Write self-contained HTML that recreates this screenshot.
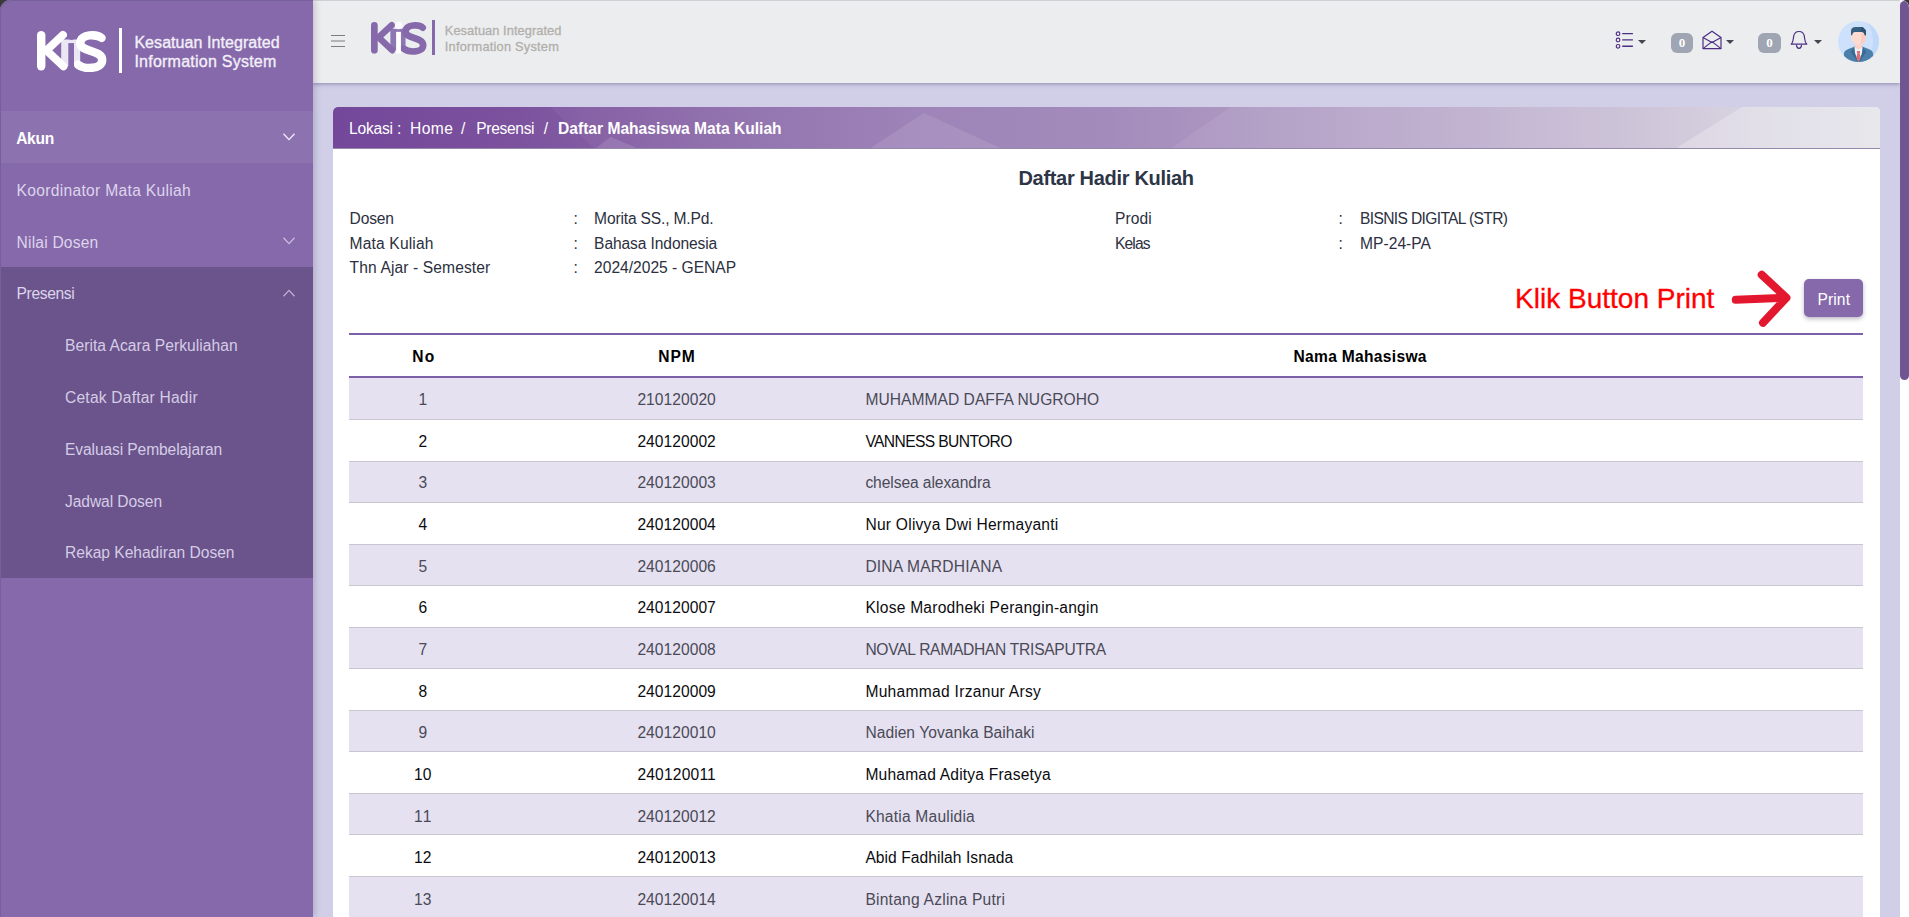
<!DOCTYPE html>
<html lang="id">
<head>
<meta charset="utf-8">
<title>KIS - Daftar Mahasiswa Mata Kuliah</title>
<style>
*{box-sizing:border-box;margin:0;padding:0}
html,body{width:1909px;height:917px;overflow:hidden;background:#3a3a3a}
body{position:relative;font-family:"Liberation Sans",sans-serif;font-size:16px;color:#2c3040}
#frame{position:absolute;left:0;top:0;width:1909px;height:917px;overflow:hidden;border-radius:11px 8px 0 0;background:#d1cfe8}
.t{position:absolute;white-space:pre;z-index:20}
svg{position:absolute;overflow:visible}
/* sidebar */
#side{position:absolute;left:0;top:0;width:313px;height:917px;background:#8569ab;box-shadow:2px 0 6px rgba(50,40,80,.22);z-index:5}
#side .akun{position:absolute;left:0;top:110.8px;width:313px;height:52px;background:#8c73b0}
#side .open{position:absolute;left:0;top:266.6px;width:313px;height:311.4px;background:#6a548b}
#edge{position:absolute;left:0;top:0;width:313px;height:917px;border-left:1px solid #75609a;border-top:1px solid #75609a;border-radius:11px 0 0 0;z-index:30;pointer-events:none}
/* topbar */
#top{position:absolute;left:313px;top:0;width:1587px;height:83px;background:#ecedef;border-top:1px solid #cfd0d3;box-shadow:0 1px 4px rgba(70,70,110,.5);z-index:4}
.badge{position:absolute;top:32px;height:20px;border-radius:6px;background:#9fa5b2;z-index:6}
.badge b{position:absolute;left:0;right:0;top:3px;text-align:center;font-family:"Liberation Serif",serif;font-size:13px;line-height:14px;color:#fff;font-weight:700}
/* card */
#card{position:absolute;left:333px;top:107px;width:1547px;height:830px;background:#fff;border-radius:5px 5px 0 0;overflow:hidden;z-index:2}
#crumb{position:absolute;left:0;top:0;width:1547px;height:42px;border-bottom:1px solid #9488ad;overflow:hidden;
 background:linear-gradient(90deg,#73479a 0%,#7c529e 12%,#8d6cab 25%,#9a7fb5 38%,#9f86b8 50%,#af9ac3 62.5%,#bdaecd 75%,#cac0d6 85%,#d4cfde 92%,#dddde3 100%)}
/* table */
.hl{position:absolute;left:349px;width:1514px;height:2px;background:#7c60a8;z-index:8}
.row{position:absolute;left:349px;width:1514px;height:41.545px;border-bottom:1px solid #c9c6d2;z-index:7}
/* button */
#btn{position:absolute;left:1804px;top:279px;width:59px;height:37.6px;border-radius:5px;background:#8569ab;box-shadow:0 2px 4px rgba(60,50,90,.35);z-index:9}
/* scrollbar */
#sb{position:absolute;left:1900px;top:0;width:9px;height:917px;background:#fff;z-index:40}
#sb i{position:absolute;left:0;top:1px;width:9.4px;height:379px;background:#6f5592;border-radius:4.7px}
</style>
</head>
<body>
<div id="frame">

<!-- SIDEBAR -->
<div id="side">
 <div class="akun"></div>
 <div class="open"></div>
 <!-- logo white -->
 <svg id="logoW" style="left:36.8px;top:31.2px" width="70" height="42" viewBox="0 0 70 42">
  <rect x="24.2" y="8.5" width="19" height="26.5" fill="#ebe6f3"/>
  <g fill="none" stroke="#fff" stroke-linecap="round" stroke-linejoin="round">
   <path d="M4.2 4.2V35.3" stroke-width="8.4"/>
   <path d="M26 3.9L9.5 19.3L26.5 35.3" stroke-width="8"/>
   <path d="M64.6 7C60.5 3.2 43.3 2.2 43.3 12C43.3 21.5 65.2 18.5 65.2 29C65.2 38.8 47 38.4 40.8 33.4" stroke-width="8.4"/>
  </g>
  <rect x="31.3" y="12.1" width="5.7" height="23" fill="#8569ab"/>
  <circle cx="34.6" cy="4.4" r="4.5" fill="#8569ab"/>
 </svg>
 <div style="position:absolute;left:119.3px;top:28.3px;width:3px;height:44.6px;background:#fff"></div>
 <!-- chevrons -->
 <svg style="left:282.6px;top:133.4px" width="12" height="8" viewBox="0 0 12 8"><path d="M.5 .8L6 6.6L11.5 .8" fill="none" stroke="#f3eff8" stroke-width="1.3"/></svg>
 <svg style="left:282.6px;top:236.6px" width="12" height="8" viewBox="0 0 12 8"><path d="M.5 .8L6 6.6L11.5 .8" fill="none" stroke="#c9bde0" stroke-width="1.3"/></svg>
 <svg style="left:282.6px;top:288.6px" width="12" height="8" viewBox="0 0 12 8"><path d="M.5 7.2L6 1.4L11.5 7.2" fill="none" stroke="#bdb0d6" stroke-width="1.3"/></svg>
</div>

<!-- TOPBAR -->
<div id="top">
 <!-- hamburger -->
 <svg style="left:18px;top:34px" width="14" height="14" viewBox="0 0 14 14"><path d="M0 .5H14M0 6H14M0 11.5H14" stroke="#7d7d7f" stroke-width="1.1" fill="none"/></svg>
 <!-- logo purple (0.8 scale) -->
 <svg id="logoP" style="left:57.9px;top:20.7px" width="56" height="33.6" viewBox="0 0 70 42">
  <rect x="24.2" y="8.5" width="19" height="26.5" fill="#8d76b4"/>
  <g fill="none" stroke="#8569ab" stroke-linecap="round" stroke-linejoin="round">
   <path d="M4.2 4.2V35.3" stroke-width="8.4"/>
   <path d="M26 3.9L9.5 19.3L26.5 35.3" stroke-width="8"/>
   <path d="M64.6 7C60.5 3.2 43.3 2.2 43.3 12C43.3 21.5 65.2 18.5 65.2 29C65.2 38.8 47 38.4 40.8 33.4" stroke-width="8.4"/>
  </g>
  <rect x="31.4" y="12.3" width="6" height="27" fill="#fff"/>
  <circle cx="34.5" cy="4.3" r="4.7" fill="#fbf9ff"/>
 </svg>
 <div style="position:absolute;left:119.2px;top:18.8px;width:2.6px;height:35.2px;background:#8569ab"></div>

 <!-- list icon -->
 <svg style="left:1302px;top:30px" width="20" height="20" viewBox="0 0 20 20" fill="none" stroke="#4b2e83" stroke-width="1.15">
  <circle cx="3.05" cy="2.7" r="1.8"/><circle cx="3.05" cy="8.95" r="1.8"/><circle cx="3.05" cy="15.25" r="1.8"/>
  <path d="M7.2 2.7H17.9M7.2 8.95H17.9M7.2 15.25H17.9" stroke-width="1.3"/>
 </svg>
 <svg style="left:1325px;top:39px" width="8" height="4" viewBox="0 0 8 4"><path d="M0 0H8L4 4Z" fill="#45454f"/></svg>
 <!-- badge 1 -->
 <div class="badge" style="left:1358px;width:22px"><b>0</b></div>
 <!-- envelope open -->
 <svg style="left:1389px;top:28.8px" width="20" height="20" viewBox="0 0 20 20" fill="none" stroke="#4b2e83" stroke-width="1.2" stroke-linejoin="round">
  <path d="M1 7.6L10 1.2L19 7.6V18.6H1Z"/>
  <path d="M1 7.6L10 12.6L19 7.6M1 18.6L10 11.6L19 18.6"/>
 </svg>
 <svg style="left:1413px;top:39px" width="8" height="4" viewBox="0 0 8 4"><path d="M0 0H8L4 4Z" fill="#45454f"/></svg>
 <!-- badge 2 -->
 <div class="badge" style="left:1445px;width:23px"><b>0</b></div>
 <!-- bell -->
 <svg style="left:1477px;top:28.6px" width="18" height="20" viewBox="0 0 18 20" fill="none" stroke="#4b2e83" stroke-width="1.2" stroke-linejoin="round" stroke-linecap="round">
  <path d="M1.2 14.2C3.4 12.2 3.2 9.4 3.6 6.6C4 3.4 6.2 1.5 9 1.5C11.8 1.5 14 3.4 14.4 6.6C14.8 9.4 14.6 12.2 16.8 14.2Z"/>
  <path d="M6.5 15.4C6.8 17.4 7.8 18.4 9 18.4C10.2 18.4 11.2 17.4 11.5 15.4"/>
 </svg>
 <svg style="left:1501px;top:39px" width="8" height="4" viewBox="0 0 8 4"><path d="M0 0H8L4 4Z" fill="#45454f"/></svg>
 <!-- avatar -->
 <svg style="left:1525px;top:20px" width="41" height="41" viewBox="-20.5 -20.5 41 41">
  <defs><clipPath id="av"><circle cx="0" cy="0" r="20.5"/></clipPath></defs>
  <circle cx="0" cy="0" r="20.5" fill="#cde1fc"/>
  <g clip-path="url(#av)">
   <path d="M7.5 -19.5C15 -13 17.5 4 9.5 20L22 20L22 -21Z" fill="#c0d8fa"/>
   <path d="M-14.6 21V12.2C-14.6 8.8 -10 7.2 -4 5.2H4C10 7.2 14.6 8.8 14.6 12.2V21Z" fill="#4a80ab"/>
   <path d="M-4.4 5.2L-7.7 10.4L-0.6 20.6H0.6L7.7 10.4L4.4 5.2Z" fill="#3a6a91"/>
   <path d="M-4.1 5.4H4.1L3.5 11.5L0 20.4L-3.5 11.5Z" fill="#e9f4fd"/>
   <path d="M-1.6 9.4H1.6V11.2L1.1 11.6L2.2 16.2L0 20.6L-2.2 16.2L-1.1 11.6L-1.6 11.2Z" fill="#de6f78"/>
   <path d="M-3.5 0H3.5V6L0 8.4L-3.5 6Z" fill="#fdd3c8"/>
   <path d="M-7.3 -7C-7.3 -9 -5 -10 0 -10C5 -10 7.3 -9 7.3 -7V-3.5C7.3 0 3.4 3.2 0 3.2C-3.4 3.2 -7.3 0 -7.3 -3.5Z" fill="#fedbd1"/>
   <path d="M2.2 -10C5.5 -9.8 7.3 -9 7.3 -7V-3.5C7.3 -.5 4.5 2.4 1.4 3.1C3.2 0 3 -5 2.2 -10Z" fill="#fdcbbf"/>
   <path d="M-7.5 -6.2V-10.5C-7.5 -13.4 -5.6 -14.5 -3 -14.5H3.6C4.6 -14.5 5 -13.7 5.4 -13C6.8 -12.4 7.5 -11 7.5 -9.4V-6.2H6.3C6 -8.2 5.2 -9.6 3.6 -9.6H-3.6C-5.2 -9.6 -6 -8.2 -6.3 -6.2Z" fill="#36607f"/>
   <path d="M2.2 -14.5H3.6C4.6 -14.5 5 -13.7 5.4 -13C6.8 -12.4 7.5 -11 7.5 -9.4V-6.2H6.3C6 -8.2 5.2 -9.6 3.6 -9.6H2.2Z" fill="#2c5472"/>
  </g>
 </svg>
</div>

<!-- CARD -->
<div id="card">
 <div id="crumb">
  <svg style="left:0;top:0" width="1547" height="42" viewBox="0 0 1547 42">
   <path d="M217 0L262 42L1547 42L1547 0Z" fill="#fff" opacity=".045"/>
   <path d="M262 42L277.6 29.7L306 42Z" fill="#fff" opacity=".12"/>
   <path d="M536 42L591 6L669.6 42Z" fill="#fff" opacity=".10"/>
   <path d="M837 42L897.5 0L1547 0L1547 42Z" fill="#fff" opacity=".07"/>
   <path d="M1341.8 42L1408.9 0L1547 0L1547 42Z" fill="#fff" opacity=".25"/>
  </svg>
 </div>
</div>

<!-- TABLE lines + rows -->
<div class="hl" style="top:333px"></div>
<div class="hl" style="top:376px"></div>
<div class="row" style="top:378.45px;background:#e5e1f0"></div>
<div class="row" style="top:420.00px;background:#ffffff"></div>
<div class="row" style="top:461.54px;background:#e5e1f0"></div>
<div class="row" style="top:503.08px;background:#ffffff"></div>
<div class="row" style="top:544.63px;background:#e5e1f0"></div>
<div class="row" style="top:586.17px;background:#ffffff"></div>
<div class="row" style="top:627.72px;background:#e5e1f0"></div>
<div class="row" style="top:669.26px;background:#ffffff"></div>
<div class="row" style="top:710.81px;background:#e5e1f0"></div>
<div class="row" style="top:752.36px;background:#ffffff"></div>
<div class="row" style="top:793.90px;background:#e5e1f0"></div>
<div class="row" style="top:835.44px;background:#ffffff"></div>
<div class="row" style="top:876.99px;background:#e5e1f0"></div>

<!-- button + arrow -->
<div id="btn"></div>
<svg style="left:1725px;top:265px;z-index:9" width="70" height="66" viewBox="1725 265 70 66">
 <path d="M1735.8 299.8L1786.2 297.8M1761.7 274.7L1786.4 297.7L1763 322.8" fill="none" stroke="#e3172d" stroke-width="8" stroke-linecap="round" stroke-linejoin="round"/>
</svg>

<span class="t" style="left:134.40px;top:32px;font-size:16px;line-height:21px;color:#f3eff8;letter-spacing:0.061px;-webkit-text-stroke:.35px #f3eff8;">Kesatuan Integrated</span>
<span class="t" style="left:134.40px;top:51px;font-size:16px;line-height:21px;color:#f3eff8;letter-spacing:0.240px;-webkit-text-stroke:.35px #f3eff8;">Information System</span>
<span class="t" style="left:16.20px;top:128px;font-size:15.6px;line-height:21px;color:#ffffff;font-weight:700;letter-spacing:-0.328px;">Akun</span>
<span class="t" style="left:16.50px;top:180px;font-size:15.6px;line-height:21px;color:#ded5ec;letter-spacing:0.313px;">Koordinator Mata Kuliah</span>
<span class="t" style="left:16.50px;top:232px;font-size:15.6px;line-height:21px;color:#ded5ec;letter-spacing:0.205px;">Nilai Dosen</span>
<span class="t" style="left:16.50px;top:283px;font-size:15.6px;line-height:21px;color:#ded5ec;letter-spacing:-0.339px;">Presensi</span>
<span class="t" style="left:65.00px;top:335px;font-size:15.6px;line-height:21px;color:#d6cce6;letter-spacing:0.042px;">Berita Acara Perkuliahan</span>
<span class="t" style="left:65.00px;top:387px;font-size:15.6px;line-height:21px;color:#d6cce6;letter-spacing:0.203px;">Cetak Daftar Hadir</span>
<span class="t" style="left:65.00px;top:439px;font-size:15.6px;line-height:21px;color:#d6cce6;letter-spacing:-0.110px;">Evaluasi Pembelajaran</span>
<span class="t" style="left:65.00px;top:491px;font-size:15.6px;line-height:21px;color:#d6cce6;letter-spacing:-0.078px;">Jadwal Dosen</span>
<span class="t" style="left:65.00px;top:542px;font-size:15.6px;line-height:21px;color:#d6cce6;letter-spacing:-0.021px;">Rekap Kehadiran Dosen</span>
<span class="t" style="left:444.80px;top:21px;font-size:12.8px;line-height:19px;color:#b1afab;letter-spacing:0.074px;-webkit-text-stroke:.3px #b1afab;">Kesatuan Integrated</span>
<span class="t" style="left:444.80px;top:37px;font-size:12.8px;line-height:19px;color:#b1afab;letter-spacing:0.221px;-webkit-text-stroke:.3px #b1afab;">Information System</span>
<span class="t" style="left:349.00px;top:118px;font-size:15.6px;line-height:21px;color:#fff;letter-spacing:-0.207px;">Lokasi :</span>
<span class="t" style="left:410.00px;top:118px;font-size:15.6px;line-height:21px;color:#fff;letter-spacing:0.464px;">Home</span>
<span class="t" style="left:461.00px;top:118px;font-size:15.6px;line-height:21px;color:#fff;">/</span>
<span class="t" style="left:476.20px;top:118px;font-size:15.6px;line-height:21px;color:#fff;letter-spacing:-0.325px;">Presensi</span>
<span class="t" style="left:543.80px;top:118px;font-size:15.6px;line-height:21px;color:#fff;">/</span>
<span class="t" style="left:558.00px;top:118px;font-size:15.6px;line-height:21px;color:#fff;font-weight:700;">Daftar Mahasiswa Mata Kuliah</span>
<span class="t" style="left:1018.45px;top:165px;font-size:20px;line-height:26px;color:#2d3546;font-weight:700;letter-spacing:-0.314px;">Daftar Hadir Kuliah</span>
<span class="t" style="left:349.60px;top:208px;font-size:15.6px;line-height:21px;color:#2c3040;letter-spacing:-0.195px;">Dosen</span>
<span class="t" style="left:349.60px;top:233px;font-size:15.6px;line-height:21px;color:#2c3040;letter-spacing:0.154px;">Mata Kuliah</span>
<span class="t" style="left:349.60px;top:257px;font-size:15.6px;line-height:21px;color:#2c3040;letter-spacing:0.113px;">Thn Ajar - Semester</span>
<span class="t" style="left:573.60px;top:208px;font-size:15.6px;line-height:21px;color:#2c3040;">:</span>
<span class="t" style="left:573.60px;top:233px;font-size:15.6px;line-height:21px;color:#2c3040;">:</span>
<span class="t" style="left:573.60px;top:257px;font-size:15.6px;line-height:21px;color:#2c3040;">:</span>
<span class="t" style="left:594.10px;top:208px;font-size:15.6px;line-height:21px;color:#2c3040;letter-spacing:-0.168px;">Morita SS., M.Pd.</span>
<span class="t" style="left:594.10px;top:233px;font-size:15.6px;line-height:21px;color:#2c3040;letter-spacing:-0.111px;">Bahasa Indonesia</span>
<span class="t" style="left:594.10px;top:257px;font-size:15.6px;line-height:21px;color:#2c3040;letter-spacing:-0.011px;">2024/2025 - GENAP</span>
<span class="t" style="left:1115.00px;top:208px;font-size:15.6px;line-height:21px;color:#2c3040;letter-spacing:0.073px;">Prodi</span>
<span class="t" style="left:1115.00px;top:233px;font-size:15.6px;line-height:21px;color:#2c3040;letter-spacing:-0.854px;">Kelas</span>
<span class="t" style="left:1338.60px;top:208px;font-size:15.6px;line-height:21px;color:#2c3040;">:</span>
<span class="t" style="left:1338.60px;top:233px;font-size:15.6px;line-height:21px;color:#2c3040;">:</span>
<span class="t" style="left:1360.00px;top:208px;font-size:15.6px;line-height:21px;color:#2c3040;letter-spacing:-0.647px;">BISNIS DIGITAL (STR)</span>
<span class="t" style="left:1360.00px;top:233px;font-size:15.6px;line-height:21px;color:#2c3040;letter-spacing:0.033px;">MP-24-PA</span>
<span class="t" style="left:1515.00px;top:281px;font-size:28px;line-height:35px;color:#ff0000;letter-spacing:0.012px;-webkit-text-stroke:.3px #ff0000;">Klik Button Print</span>
<span class="t" style="left:1817.40px;top:289px;font-size:15.6px;line-height:21px;color:#fff;letter-spacing:0.130px;">Print</span>
<span class="t" style="left:412.20px;top:346px;font-size:15.6px;line-height:21px;color:#000;font-weight:700;letter-spacing:1.203px;">No</span>
<span class="t" style="left:658.35px;top:346px;font-size:15.6px;line-height:21px;color:#000;font-weight:700;letter-spacing:0.922px;">NPM</span>
<span class="t" style="left:1293.50px;top:346px;font-size:15.6px;line-height:21px;color:#000;font-weight:700;letter-spacing:0.296px;">Nama Mahasiswa</span>
<span class="t" style="left:418.46px;top:389px;font-size:15.6px;line-height:21px;color:#4a4a57;">1</span>
<span class="t" style="left:637.40px;top:389px;font-size:15.6px;line-height:21px;color:#4a4a57;letter-spacing:0.042px;">210120020</span>
<span class="t" style="left:865.40px;top:389px;font-size:15.6px;line-height:21px;color:#4a4a57;letter-spacing:0.036px;">MUHAMMAD DAFFA NUGROHO</span>
<span class="t" style="left:418.46px;top:431px;font-size:15.6px;line-height:21px;color:#0c0c10;">2</span>
<span class="t" style="left:637.40px;top:431px;font-size:15.6px;line-height:21px;color:#0c0c10;letter-spacing:0.042px;">240120002</span>
<span class="t" style="left:865.40px;top:431px;font-size:15.6px;line-height:21px;color:#0c0c10;letter-spacing:-0.599px;">VANNESS BUNTORO</span>
<span class="t" style="left:418.46px;top:472px;font-size:15.6px;line-height:21px;color:#4a4a57;">3</span>
<span class="t" style="left:637.40px;top:472px;font-size:15.6px;line-height:21px;color:#4a4a57;letter-spacing:0.042px;">240120003</span>
<span class="t" style="left:865.40px;top:472px;font-size:15.6px;line-height:21px;color:#4a4a57;letter-spacing:-0.080px;">chelsea alexandra</span>
<span class="t" style="left:418.46px;top:514px;font-size:15.6px;line-height:21px;color:#0c0c10;">4</span>
<span class="t" style="left:637.40px;top:514px;font-size:15.6px;line-height:21px;color:#0c0c10;letter-spacing:0.042px;">240120004</span>
<span class="t" style="left:865.40px;top:514px;font-size:15.6px;line-height:21px;color:#0c0c10;letter-spacing:0.239px;">Nur Olivya Dwi Hermayanti</span>
<span class="t" style="left:418.46px;top:556px;font-size:15.6px;line-height:21px;color:#4a4a57;">5</span>
<span class="t" style="left:637.40px;top:556px;font-size:15.6px;line-height:21px;color:#4a4a57;letter-spacing:0.042px;">240120006</span>
<span class="t" style="left:865.40px;top:556px;font-size:15.6px;line-height:21px;color:#4a4a57;letter-spacing:0.191px;">DINA MARDHIANA</span>
<span class="t" style="left:418.46px;top:597px;font-size:15.6px;line-height:21px;color:#0c0c10;">6</span>
<span class="t" style="left:637.40px;top:597px;font-size:15.6px;line-height:21px;color:#0c0c10;letter-spacing:0.042px;">240120007</span>
<span class="t" style="left:865.40px;top:597px;font-size:15.6px;line-height:21px;color:#0c0c10;letter-spacing:0.233px;">Klose Marodheki Perangin-angin</span>
<span class="t" style="left:418.46px;top:639px;font-size:15.6px;line-height:21px;color:#4a4a57;">7</span>
<span class="t" style="left:637.40px;top:639px;font-size:15.6px;line-height:21px;color:#4a4a57;letter-spacing:0.042px;">240120008</span>
<span class="t" style="left:865.40px;top:639px;font-size:15.6px;line-height:21px;color:#4a4a57;letter-spacing:-0.285px;">NOVAL RAMADHAN TRISAPUTRA</span>
<span class="t" style="left:418.46px;top:681px;font-size:15.6px;line-height:21px;color:#0c0c10;">8</span>
<span class="t" style="left:637.40px;top:681px;font-size:15.6px;line-height:21px;color:#0c0c10;letter-spacing:0.042px;">240120009</span>
<span class="t" style="left:865.40px;top:681px;font-size:15.6px;line-height:21px;color:#0c0c10;letter-spacing:0.282px;">Muhammad Irzanur Arsy</span>
<span class="t" style="left:418.46px;top:722px;font-size:15.6px;line-height:21px;color:#4a4a57;">9</span>
<span class="t" style="left:637.40px;top:722px;font-size:15.6px;line-height:21px;color:#4a4a57;letter-spacing:0.042px;">240120010</span>
<span class="t" style="left:865.40px;top:722px;font-size:15.6px;line-height:21px;color:#4a4a57;letter-spacing:0.047px;">Nadien Yovanka Baihaki</span>
<span class="t" style="left:414.10px;top:764px;font-size:15.6px;line-height:21px;color:#0c0c10;letter-spacing:0.041px;">10</span>
<span class="t" style="left:637.40px;top:764px;font-size:15.6px;line-height:21px;color:#0c0c10;letter-spacing:0.187px;">240120011</span>
<span class="t" style="left:865.40px;top:764px;font-size:15.6px;line-height:21px;color:#0c0c10;letter-spacing:0.188px;">Muhamad Aditya Frasetya</span>
<span class="t" style="left:414.10px;top:806px;font-size:15.6px;line-height:21px;color:#4a4a57;letter-spacing:1.212px;">11</span>
<span class="t" style="left:637.40px;top:806px;font-size:15.6px;line-height:21px;color:#4a4a57;letter-spacing:0.042px;">240120012</span>
<span class="t" style="left:865.40px;top:806px;font-size:15.6px;line-height:21px;color:#4a4a57;letter-spacing:0.198px;">Khatia Maulidia</span>
<span class="t" style="left:414.10px;top:847px;font-size:15.6px;line-height:21px;color:#0c0c10;letter-spacing:0.041px;">12</span>
<span class="t" style="left:637.40px;top:847px;font-size:15.6px;line-height:21px;color:#0c0c10;letter-spacing:0.042px;">240120013</span>
<span class="t" style="left:865.40px;top:847px;font-size:15.6px;line-height:21px;color:#0c0c10;letter-spacing:0.062px;">Abid Fadhilah Isnada</span>
<span class="t" style="left:414.10px;top:889px;font-size:15.6px;line-height:21px;color:#4a4a57;letter-spacing:0.041px;">13</span>
<span class="t" style="left:637.40px;top:889px;font-size:15.6px;line-height:21px;color:#4a4a57;letter-spacing:0.042px;">240120014</span>
<span class="t" style="left:865.40px;top:889px;font-size:15.6px;line-height:21px;color:#4a4a57;letter-spacing:0.225px;">Bintang Azlina Putri</span>

<div id="edge"></div>
<div id="sb"><i></i></div>
</div>
</body>
</html>
